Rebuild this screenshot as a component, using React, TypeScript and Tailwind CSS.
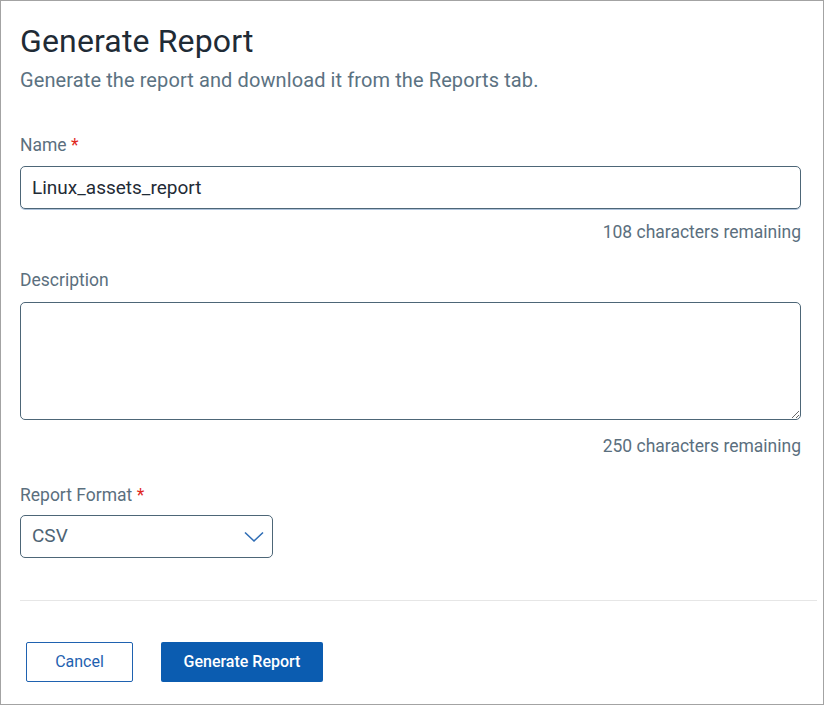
import React from "react";

export default function App() {
  return (
    <div className="w-[824px] h-[705px] border border-[#a3a3a3] bg-white px-[19px] font-['Roboto',sans-serif]">
      <h1 className="pt-[20px] text-[32px] leading-[40px] tracking-[0.15px] text-[#1f2b36]">Generate Report</h1>
      <p className="mt-[5px] text-[20px] leading-[28px] tracking-[0.1px] text-[#5b7282]">
        Generate the report and download it from the Reports tab.
      </p>

      {/* Name */}
      <label className="block mt-[39px] text-[17.5px] leading-[24px] text-[#5b6f7e]">
        Name <span className="text-[#e0281e]">*</span>
      </label>
      <input
        type="text"
        defaultValue="Linux_assets_report"
        className="block mt-[9px] w-[781px] h-[43px] rounded-[5px] border border-[#4d6677] px-[11px] text-[19px] text-[#1f2b36] shadow-[0_1px_0_#aec3dc] outline-none"
      />
      <div className="mt-[11px] w-[781px] text-right text-[17.5px] leading-[24px] text-[#5b6f7e]">
        108 characters remaining
      </div>

      {/* Description */}
      <label className="block mt-[24px] text-[17.5px] leading-[24px] text-[#5b6f7e]">Description</label>
      <textarea className="block mt-[10px] w-[781px] h-[118px] rounded-[5px] border border-[#4d6677] px-[11px] py-[8px] text-[19px] outline-none" />
      <div className="mt-[14px] w-[781px] text-right text-[17.5px] leading-[24px] text-[#5b6f7e]">
        250 characters remaining
      </div>

      {/* Report format */}
      <label className="block mt-[25px] text-[17.5px] leading-[24px] text-[#5b6f7e]">
        Report Format <span className="text-[#e0281e]">*</span>
      </label>
      <div className="mt-[8px] flex items-center justify-between w-[253px] h-[43px] rounded-[5px] border border-[#4d6677] pl-[11px] pr-[8px]">
        <span className="text-[19px] text-[#4e6474]">CSV</span>
        <svg width="20" height="12" viewBox="0 0 20 12" fill="none">
          <polyline points="1,1.5 10,10 19,1.5" stroke="#2f6db5" strokeWidth="1.6" />
        </svg>
      </div>

      <div className="mt-[42px] w-[797px] border-t border-[#e6e6e6]" />

      <div className="mt-[41px] ml-[6px] flex gap-[28px]">
        <button className="w-[107px] h-[40px] rounded-[2px] border border-[#1f62b0] text-[16px] text-[#1f62b0]">
          Cancel
        </button>
        <button className="w-[162px] h-[40px] rounded-[2px] bg-[#0b5cb0] text-[16px] font-medium text-white">
          Generate Report
        </button>
      </div>
    </div>
  );
}
